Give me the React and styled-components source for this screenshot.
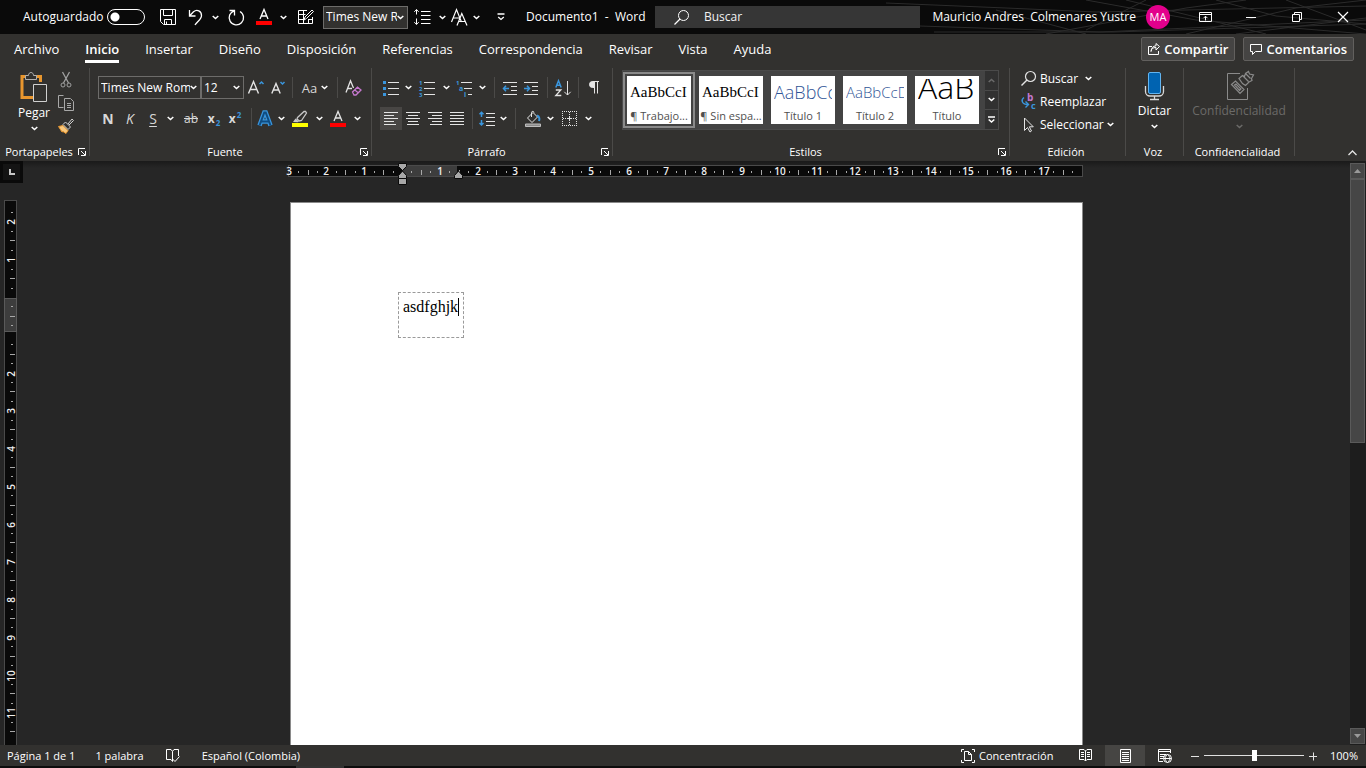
import React from "react";
import styled, { createGlobalStyle, css } from "styled-components";

const UI = '"Open Sans", "Noto Sans", sans-serif';

const GlobalStyle = createGlobalStyle`
  * { box-sizing: border-box; }
  body { margin: 0; background: #262626; overflow: hidden; }
  button, select, input { font: inherit; color: inherit; }
`;

const Shell = styled.div`
  display: flex;
  flex-direction: column;
  height: 100vh;
  font: 12px/16px ${UI};
  color: #fff;
  background: #262626;
`;

/* ---------- shared pieces ---------- */

const Svg = styled.svg`
  display: block;
  flex: none;
  overflow: visible;
  fill: none;
  stroke: ${(p) => p.$stroke || "#e4e4e4"};
  stroke-width: ${(p) => p.$sw || 1};
`;

const Icon = ({ w = 16, h = 16, stroke, sw, children }) => (
  <Svg width={w} height={h} viewBox={`0 0 ${w} ${h}`} $stroke={stroke} $sw={sw} aria-hidden="true">
    {children}
  </Svg>
);

const Chevron = ({ color = "#fff" }) => (
  <Icon w={7} h={5} stroke={color} sw={1.5}>
    <path d="M.7 1l2.8 2.6L6.3 1" />
  </Icon>
);

const BareButton = styled.button`
  display: flex;
  align-items: center;
  justify-content: center;
  flex: none;
  padding: 0;
  border: 0;
  background: none;
  white-space: nowrap;
`;

const Tool = styled(BareButton)`
  width: ${(p) => p.$w || 22}px;
  height: 23px;
  gap: 4px;
  background: ${(p) => (p.$active ? "#484644" : "none")};
`;

const Drop = ({ label }) => (
  <Tool $w={12} aria-label={label}>
    <Chevron />
  </Tool>
);

const Separator = styled.span`
  flex: none;
  width: ${(p) => p.$w || 9}px;
  height: 21px;
  background: linear-gradient(#4b4a48, #4b4a48) center / 1px 100% no-repeat;
`;

const SelectFrame = styled.span`
  display: grid;
  flex: none;
  align-items: center;
  width: ${(p) => p.$w}px;
  height: 23px;
  border: 1px solid #6d6c6a;
  background: #32312f;
  & > * { grid-area: 1 / 1; }
  & > svg { justify-self: end; margin-right: 3px; pointer-events: none; }
`;

const Select = styled.select`
  appearance: none;
  width: 100%;
  height: 21px;
  padding: 0 10px 0 2px;
  border: 0;
  background: transparent;
  font-size: 12px;
  text-overflow: clip;
  outline: none;
`;

const Combo = ({ label, value, w }) => (
  <SelectFrame $w={w}>
    <Select aria-label={label} defaultValue={value}>
      <option>{value}</option>
    </Select>
    <Chevron />
  </SelectFrame>
);

/* ---------- title bar ---------- */

const TitleBar = styled.header`
  position: relative;
  display: flex;
  align-items: center;
  flex: none;
  height: 34px;
  padding-left: 23px;
  background: #0a0a0a;
`;

const Rays = styled.svg`
  position: absolute;
  top: 0;
  right: 0;
  width: 480px;
  height: 34px;
  fill: none;
  stroke: #2b2b2b;
`;

const QuickAccess = styled.div`
  display: flex;
  align-items: center;
  flex: none;
  width: 503px;
`;

const AutoSave = styled.label`
  display: flex;
  align-items: center;
  justify-content: space-between;
  flex: none;
  width: 122px;
  margin-right: 10px;
`;

const Switch = styled.input`
  appearance: none;
  width: 38px;
  height: 16px;
  margin: 0;
  border: 1px solid #fff;
  border-radius: 8px;
  background: radial-gradient(circle at 7px 7px, #fff 4px, transparent 5px);
`;

const DocTitle = styled.h1`
  flex: none;
  width: 129px;
  margin: 0;
  font-size: 12px;
  line-height: 16px;
  font-weight: 400;
  white-space: pre;
`;

const SearchBox = styled.label`
  display: flex;
  align-items: center;
  flex: 0 1 265px;
  height: 22px;
  padding-left: 19px;
  gap: 15px;
  background: #363636;
`;

const SearchInput = styled.input`
  flex: 1;
  min-width: 0;
  padding: 0;
  border: 0;
  background: none;
  outline: none;
  &::placeholder { color: #f2f2f2; opacity: 1; }
`;

const Account = styled(BareButton)`
  position: relative;
  margin-left: auto;
  gap: 10px;
  white-space: pre;
`;

const Avatar = styled.span`
  display: flex;
  align-items: center;
  justify-content: center;
  width: 24px;
  height: 24px;
  border-radius: 50%;
  background: #e3008c;
  font-size: 11px;
`;

const WindowButtons = styled.div`
  position: relative;
  display: flex;
  flex: none;
  margin-left: 12px;
`;

const WindowButton = styled(BareButton)`
  width: 46px;
  height: 32px;
`;

const FontColor = ({ color = "#ff0000", stroke }) => (
  <Icon stroke={stroke}>
    <path d="M4 10L8 .5l4 9.500M5.300 7h5.400" strokeWidth="1.300" />
    <path d="M0 12h16v4H0z" fill={color} stroke="none" />
  </Icon>
);

function Title() {
  return (
    <TitleBar>
      <Rays viewBox="0 0 480 34" aria-hidden="true">
        <path d="M0 3l120 5 90 4 270-6M34 26l180 6 266-12M48 32h180l252-8M160 34L300 8l60-8M200 0l110 20 170 14M260 0l-60 30M300 34L410 8l70-8M330 0l60 16 90 8M240 0l140 34M400 0l80 30M110 10l90 24M350 34l130-16" />
      </Rays>
      <QuickAccess>
        <AutoSave>
          Autoguardado
          <Switch type="checkbox" role="switch" />
        </AutoSave>
        <Tool $w={26} aria-label="Guardar">
          <Icon stroke="#fff">
            <path d="M.5 .5h15v15h-12l-3-3zM3.500 .5v6h9v-6M4.500 15.500v-5h7v5M6.500 15.500v-3" />
          </Icon>
        </Tool>
        <Tool $w={28} aria-label="Deshacer">
          <Icon stroke="#fff">
            <path d="M2.500 1v6h6M2.500 7l4-4.200C10-.2 14.500 2 14.500 6.500c0 4-4.500 6-6.500 9.500" strokeWidth="1.300" />
          </Icon>
        </Tool>
        <Drop label="Opciones de deshacer" />
        <Tool $w={30} aria-label="Rehacer">
          <Icon stroke="#fff">
            <path d="M1.500 1.500h5v5M6.300 1.800A7.200 7.200 0 1 0 12 2.500" strokeWidth="1.300" />
          </Icon>
        </Tool>
        <Tool $w={26} aria-label="Color de fuente">
          <FontColor stroke="#fff" />
        </Tool>
        <Drop label="Más colores" />
        <Tool $w={34} aria-label="Dibujar tabla">
          <Icon stroke="#fff">
            <path d="M9 1.500H.5v13h14V8M.5 5.500h7M.5 10.500h5M5.500 1.500v13M10.500 11v3.500M10 10.500h4.500M6 11l1-3 7-7 1.500 1.500-7 7z" />
          </Icon>
        </Tool>
        <Combo label="Fuente rápida" value="Times New R" w={85} />
        <Tool $w={28} aria-label="Interlineado">
          <Icon stroke="#fff">
            <path d="M2.500 .5v5M.3 2.800L2.500 .6l2.200 2.200M2.500 15.500v-6M.3 13.200l2.200 2.200 2.200-2.200M7 2.500h9.500M7 6.500h9.500M7 10.500h9.500M7 14.500h9.500" />
          </Icon>
        </Tool>
        <Drop label="Opciones de interlineado" />
        <Tool aria-label="Efectos de texto">
          <Icon stroke="#fff">
            <path d="M.5 13L5.500 .5 10.500 13M2 9h7M6 16.500l4.800-12 5.200 12M7.700 12.500h6.600" strokeWidth="1.200" />
          </Icon>
        </Tool>
        <Drop label="Opciones de efectos" />
        <Tool $w={38} aria-label="Personalizar barra">
          <Icon w={8} h={8} stroke="#fff">
            <path d="M.5 1h7M1.200 4l2.800 2.500L6.800 4" strokeWidth="1.300" />
          </Icon>
        </Tool>
      </QuickAccess>
      <DocTitle>Documento1  -  Word</DocTitle>
      <SearchBox>
        <Icon w={15} h={15} stroke="#fff">
          <circle cx="9.500" cy="5.500" r="5" />
          <path d="M6 9L.5 14.500" strokeWidth="1.300" />
        </Icon>
        <SearchInput type="text" placeholder="Buscar" aria-label="Buscar" />
      </SearchBox>
      <Account>
        Mauricio Andres  Colmenares Yustre
        <Avatar>MA</Avatar>
      </Account>
      <WindowButtons>
        <WindowButton aria-label="Opciones de la cinta">
          <Icon w={13} h={10} stroke="#fff">
            <path d="M.5 .5h12v9H.5zM.5 2.500h12M6.500 8.500v-4M4.500 6.200l2-2 2 2" />
          </Icon>
        </WindowButton>
        <WindowButton aria-label="Minimizar">
          <Icon w={10} h={10} stroke="#fff"><path d="M0 5.500h10" /></Icon>
        </WindowButton>
        <WindowButton aria-label="Restaurar">
          <Icon w={10} h={10} stroke="#fff"><path d="M.5 2.500h7v7h-7zM2.500 2.500v-2h7v7h-2" /></Icon>
        </WindowButton>
        <WindowButton aria-label="Cerrar">
          <Icon w={10} h={10} stroke="#fff"><path d="M0 0l10 10M10 0L0 10" strokeWidth="1.200" /></Icon>
        </WindowButton>
      </WindowButtons>
    </TitleBar>
  );
}

/* ---------- tabs ---------- */

const TabBar = styled.nav`
  display: flex;
  align-items: center;
  flex: none;
  height: 30px;
  padding: 0 12px 0 14px;
  background: #32312f;
`;

const TabList = styled.div`
  display: flex;
  gap: 26px;
`;

const Tab = styled(BareButton)`
  height: 28px;
  font-size: 13px;
  line-height: 18px;
  ${(p) => p.$active && css`
    font-weight: 600;
    box-shadow: inset 0 -3px #fff;
  `}
`;

const TabActions = styled.div`
  display: flex;
  gap: 8px;
  margin-left: auto;
`;

const ActionButton = styled(BareButton)`
  height: 24px;
  padding: 0 6px;
  gap: 4px;
  border: 1px solid #62605e;
  border-radius: 2px;
  background: #454443;
  font-size: 13px;
  font-weight: 600;
`;

const tabs = ["Archivo", "Inicio", "Insertar", "Diseño", "Disposición", "Referencias", "Correspondencia", "Revisar", "Vista", "Ayuda"];

const Tabs = () => (
  <TabBar>
    <TabList>
      {tabs.map((t) => <Tab key={t} $active={t === "Inicio"}>{t}</Tab>)}
    </TabList>
    <TabActions>
      <ActionButton>
        <Icon w={12} h={12} stroke="#fff">
          <path d="M4 3.500H.5v8h10V8M3 8.500c.5-3 2-4 5-4V7l3.500-3.500L8 .5v2.300C5 3 3.300 5 3 8.500z" />
        </Icon>
        Compartir
      </ActionButton>
      <ActionButton>
        <Icon w={12} h={12} stroke="#fff"><path d="M.5 1.500h11v7h-6l-3 3v-3h-2z" /></Icon>
        Comentarios
      </ActionButton>
    </TabActions>
  </TabBar>
);

/* ---------- ribbon ---------- */

const Ribbon = styled.div`
  display: flex;
  flex: none;
  height: 97px;
  background: #32312f;
`;

const GroupFrame = styled.section`
  display: flex;
  flex-direction: column;
  flex: 0 0 ${(p) => p.$w}px;
  background: linear-gradient(#4b4a48, #4b4a48) right 4px / 1px 88px no-repeat;
`;

const GroupBody = styled.div`
  display: flex;
  flex: 1;
  padding: ${(p) => p.$pad || "0 8px"};
`;

const GroupFooter = styled.div`
  display: flex;
  align-items: center;
  height: 18px;
  padding-right: 4px;
`;

const GroupTitle = styled.h2`
  flex: 1;
  margin: 0;
  font-size: 11px;
  line-height: 16px;
  font-weight: 500;
  text-align: center;
`;

const Group = ({ title, w, launcher, pad, children }) => (
  <GroupFrame $w={w} aria-label={title}>
    <GroupBody $pad={pad}>{children}</GroupBody>
    <GroupFooter>
      <GroupTitle>{title}</GroupTitle>
      {launcher && (
        <BareButton aria-label={`Más opciones de ${title}`}>
          <Icon w={8} h={8} stroke="#fff">
            <path d="M.5 7V.5H7M3 3l4 4M7.500 3v4.500H3" />
          </Icon>
        </BareButton>
      )}
    </GroupFooter>
  </GroupFrame>
);

const ToolRows = styled.div`
  display: flex;
  flex-direction: column;
  gap: 8px;
  padding-top: 12px;
`;

const ToolRow = styled.div`
  display: flex;
  height: 23px;
  align-items: center;
`;

const BigTool = styled(BareButton)`
  flex-direction: column;
  justify-content: flex-start;
  width: ${(p) => p.$w}px;
  padding-top: 8px;
  color: ${(p) => (p.$off ? "#6b6a68" : "#fff")};
  & > span { margin: 3px 0 5px; }
`;

const SmallStack = styled.div`
  display: flex;
  flex-direction: column;
  padding-top: 4px;
`;

const Glyph = styled.span`
  font-size: ${(p) => p.$size || 14}px;
  line-height: 20px;
  color: #d8d8d8;
  font-weight: ${(p) => (p.$bold ? 700 : 400)};
  font-style: ${(p) => (p.$italic ? "italic" : "normal")};
  text-decoration: ${(p) => p.$line || "none"};
  text-underline-offset: 2px;
  & > sub, & > sup { margin-left: 1px; font-size: 8px; line-height: 0; color: #3a96dd; }
`;

const Clipboard = () => (
  <Group title="Portapapeles" w={90} launcher pad="0 0 0 12px">
    <BigTool $w={44}>
      <Icon w={28} h={30}>
        <path d="M8 4.500H2v21h11M16 4.500h4.500V10" stroke="#e8962e" strokeWidth="3" />
        <path d="M5.500 7.500v-4h3c0-4 5-4 5 0h3v4z" fill="#32312f" stroke="#b0b0b0" />
        <path d="M13.500 12.500h13v17h-13z" fill="#32312f" stroke="#d0d0d0" />
      </Icon>
      <span>Pegar</span>
      <Chevron />
    </BigTool>
    <SmallStack>
      <Tool $w={20} aria-label="Cortar">
        <Icon stroke="#a0a0a0">
          <path d="M4.500 0l6 11M11.500 0l-6 11" strokeWidth="1.300" />
          <circle cx="5" cy="13" r="2" /><circle cx="11" cy="13" r="2" />
        </Icon>
      </Tool>
      <Tool $w={20} aria-label="Copiar">
        <Icon stroke="#a8a8a8">
          <path d="M5.500 12.500H.5V.5h5M8 3.500h3M6.500 3.500h6l3 3v9h-9zM9 8.500h4M9 10.500h4M9 12.500h4" />
        </Icon>
      </Tool>
      <Tool $w={20} aria-label="Copiar formato">
        <Icon stroke="#d0d0d0">
          <path d="M.5 8.500l4.500-1 5 5-2 3-3-2-1 .5z" fill="#f8c77c" stroke="#e8962e" />
          <path d="M5 6.500L7.500 4l5 5L10 11.500zM10 6l4-5 1.500 1.500L11 7" />
        </Icon>
      </Tool>
    </SmallStack>
  </Group>
);

const FontGroup = () => (
  <Group title="Fuente" w={282} launcher>
    <ToolRows>
      <ToolRow>
        <Combo label="Fuente" value="Times New Rom" w={103} />
        <Combo label="Tamaño de fuente" value="12" w={43} />
        <Tool $w={24} aria-label="Aumentar tamaño">
          <Icon>
            <path d="M.5 13.500L5.500 1.500l5 12M2.300 9.500h6.400" strokeWidth="1.400" />
            <path d="M11.500 4l2-2 2 2" stroke="#3a96dd" strokeWidth="1.500" />
          </Icon>
        </Tool>
        <Tool $w={20} aria-label="Reducir tamaño">
          <Icon w={14}>
            <path d="M.8 13.500L5 3.500l4.200 10M2.200 10h5.600" strokeWidth="1.400" />
            <path d="M9.500 2l2 2 2-2" stroke="#3a96dd" strokeWidth="1.500" />
          </Icon>
        </Tool>
        <Separator />
        <Tool $w={36} aria-label="Cambiar mayúsculas">
          <Glyph $size={13}>Aa</Glyph>
          <Chevron />
        </Tool>
        <Separator />
        <Tool aria-label="Borrar formato">
          <Icon w={17}>
            <path d="M1 12.500L5.500 .8 8.500 8M2.500 8.500h4.500" strokeWidth="1.300" />
            <path d="M7.500 12l5-4.800 3.500 2.800-5 5H9zM9.500 9.800l4 3.200" stroke="#c678cf" strokeWidth="1.300" />
          </Icon>
        </Tool>
      </ToolRow>
      <ToolRow>
        <Tool $w={20} aria-label="Negrita"><Glyph $bold>N</Glyph></Tool>
        <Tool $w={24} aria-label="Cursiva"><Glyph $italic>K</Glyph></Tool>
        <Tool aria-label="Subrayado"><Glyph $line="underline">S</Glyph></Tool>
        <Drop label="Opciones de subrayado" />
        <Tool $w={30} aria-label="Tachado"><Glyph $size={12} $line="line-through">ab</Glyph></Tool>
        <Tool $w={16} aria-label="Subíndice"><Glyph $size={12} $bold>x<sub>2</sub></Glyph></Tool>
        <Tool $w={26} aria-label="Superíndice"><Glyph $size={12} $bold>x<sup>2</sup></Glyph></Tool>
        <Separator $w={7} />
        <Tool $w={20} aria-label="Efectos de texto">
          <Icon>
            <path d="M2.500 14.500L7.300 1.500h1.400l4.800 13M4.500 10.500h7" stroke="#3a96dd" strokeWidth="4.500" />
            <path d="M2.500 14.500L7.300 1.500h1.400l4.800 13M4.500 10.500h7" stroke="#0f4c81" strokeWidth="2" />
          </Icon>
        </Tool>
        <Drop label="Opciones de efectos de texto" />
        <Tool $w={26} aria-label="Resaltado">
          <Icon stroke="#c8c8c8">
            <path d="M5.500 6.500L12 .5h1.500l1 1.500-5 7.500-2 .5-2.500-2z" strokeWidth="1.300" />
            <path d="M1 11l2.500-3.500 3.500 3-1 .8z" fill="#c8c8c8" stroke="none" />
            <path d="M0 12h16v4H0z" fill="#ffff00" stroke="none" />
          </Icon>
        </Tool>
        <Drop label="Colores de resaltado" />
        <Tool $w={26} aria-label="Color de fuente"><FontColor /></Tool>
        <Drop label="Más colores de fuente" />
      </ToolRow>
    </ToolRows>
  </Group>
);

const alignments = [
  ["Alinear a la izquierda", "M0 1.500h14M0 4.500h10M0 7.500h14M0 10.500h10M0 13.500h12", true],
  ["Centrar", "M0 1.500h14M2 4.500h10M0 7.500h14M2 10.500h10M1 13.500h12"],
  ["Alinear a la derecha", "M0 1.500h14M4 4.500h10M0 7.500h14M4 10.500h10M2 13.500h12"],
  ["Justificar", "M0 1.500h14M0 4.500h14M0 7.500h14M0 10.500h14M0 13.500h14"],
];

const IconLabel = styled.text`
  fill: ${(p) => p.$color || "#3a96dd"};
  stroke: none;
  font: 700 ${(p) => p.$size || 6}px ${UI};
`;

const Paragraph = () => (
  <Group title="Párrafo" w={241} launcher>
    <ToolRows>
      <ToolRow>
        <Tool aria-label="Viñetas">
          <Icon>
            <path d="M0 1h3v3H0zM0 7h3v3H0zM0 13h3v3H0z" fill="#3a96dd" stroke="none" />
            <path d="M5 2.500h11M5 8.500h11M5 14.500h11" />
          </Icon>
        </Tool>
        <Drop label="Opciones de viñetas" />
        <Tool $w={26} aria-label="Numeración">
          <Icon>
            <IconLabel x="0" y="5">1</IconLabel>
            <IconLabel x="0" y="11">2</IconLabel>
            <IconLabel x="0" y="17">3</IconLabel>
            <path d="M5 2.500h11M5 8.500h11M5 14.500h11" />
          </Icon>
        </Tool>
        <Drop label="Opciones de numeración" />
        <Tool $w={24} aria-label="Lista multinivel">
          <Icon>
            <IconLabel x="0" y="5">1</IconLabel>
            <IconLabel x="3" y="11" $size={7}>a</IconLabel>
            <IconLabel x="8" y="17" $size={7}>i</IconLabel>
            <path d="M5 2.500h11M8 8.500h8M12 14.500h4" />
          </Icon>
        </Tool>
        <Drop label="Opciones de lista multinivel" />
        <Separator $w={13} />
        <Tool $w={18} aria-label="Disminuir sangría">
          <Icon w={14} h={14}>
            <path d="M0 1.500h14M8 5.500h6M8 9.500h6M0 13.500h14" />
            <path d="M6 7.500H.5M3 4.800L.5 7.500 3 10.200" stroke="#3a96dd" strokeWidth="1.500" />
          </Icon>
        </Tool>
        <Tool $w={24} aria-label="Aumentar sangría">
          <Icon w={14} h={14}>
            <path d="M0 1.500h14M8 5.500h6M8 9.500h6M0 13.500h14" />
            <path d="M0 7.500h5.500M3 4.800l2.500 2.700L3 10.200" stroke="#3a96dd" strokeWidth="1.500" />
          </Icon>
        </Tool>
        <Separator />
        <Tool aria-label="Ordenar">
          <Icon>
            <path d="M.8 7.500L3.500 .8l2.700 6.700M1.800 5.300h3.400" stroke="#3a96dd" strokeWidth="1.500" />
            <path d="M.8 10h5l-5 5.500h5.500" strokeWidth="1.300" />
            <path d="M12.500 1v14M9.300 11.800l3.200 3.200 3.200-3.200" />
          </Icon>
        </Tool>
        <Separator />
        <Tool aria-label="Mostrar todo">
          <Icon w={10} h={13}>
            <path d="M5.500 .5h-2a3 3 0 0 0 0 6h2z" fill="#e4e4e4" />
            <path d="M5.500 .5v12M8.500 .5v12M3.500 .5H10" />
          </Icon>
        </Tool>
      </ToolRow>
      <ToolRow>
        {alignments.map(([name, d, active]) => (
          <Tool key={name} aria-label={name} $active={active}>
            <Icon w={14} h={15}><path d={d} /></Icon>
          </Tool>
        ))}
        <Separator />
        <Tool $w={20} aria-label="Espaciado entre líneas">
          <Icon>
            <path d="M2.500 1v5M.5 3.300l2-2 2 2M2.500 9v5.500M.5 12l2 2 2-2" stroke="#3a96dd" strokeWidth="1.500" />
            <path d="M7 2.500h9M7 6.500h9M7 10.500h9M7 14.500h9" />
          </Icon>
        </Tool>
        <Drop label="Opciones de espaciado" />
        <Separator $w={13} />
        <Tool aria-label="Sombreado">
          <Icon>
            <path d="M2.500 7L8 1.500 12.500 6 7 11.500zM6.500 6V1.500c0-1.500 2.500-1.500 2.500 0" />
            <path d="M12 4.500c3 1 2.500 4 2 5.500" stroke="#3a96dd" strokeWidth="2" />
            <path d="M.5 13h15v2.500H.5z" fill="#8a8a8a" stroke="#bdbdbd" />
          </Icon>
        </Tool>
        <Drop label="Colores de sombreado" />
        <Tool $w={26} aria-label="Bordes">
          <Icon w={15} h={15}>
            <path d="M0 .5h15M0 14.500h15M.5 0v15M14.500 0v15" strokeDasharray="1 1" />
            <path d="M1 7.500h13M7.500 1v13" strokeDasharray="1 1" />
            <path d="M5.500 7.500h4M7.500 5.500v4" />
          </Icon>
        </Tool>
        <Drop label="Opciones de bordes" />
      </ToolRow>
    </ToolRows>
  </Group>
);

const Gallery = styled.div`
  display: flex;
  height: 60px;
  margin-top: 6px;
  border: 1px solid #4a4a4a;
  background: #434343;
`;

const StyleCard = styled.button`
  display: flex;
  flex-direction: column;
  width: 72px;
  height: 56px;
  margin-top: 1px;
  padding: 2px;
  border: 2px solid ${(p) => (p.$active ? "#8a8a8a" : "transparent")};
  background: transparent;
  text-align: center;
`;

const Sheet = styled.span`
  display: block;
  width: 64px;
  height: 48px;
  padding: 3px 3px 0;
  background: #fff;
`;

const Sample = styled.span`
  display: block;
  height: 29px;
  overflow: hidden;
  text-align: left;
  white-space: nowrap;
  color: ${(p) => p.$color || "#000"};
  font-family: ${(p) => (p.$serif ? '"Liberation Serif", serif' : UI)};
  font-size: ${(p) => p.$size}px;
  font-weight: ${(p) => (p.$serif ? 400 : 300)};
  line-height: ${(p) => p.$line || 26}px;
`;

const StyleName = styled.span`
  display: block;
  margin: 0 -3px;
  color: #505050;
  font-size: 11px;
  line-height: 16px;
  white-space: nowrap;
`;

const GalleryNav = styled.div`
  display: grid;
  grid-template-rows: repeat(3, 1fr);
  gap: 1px;
  width: 13px;
  margin-left: 2px;
  background: #4a4a4a;
`;

const NavButton = styled(BareButton)`
  background: #313131;
`;

const styleCards = [
  { name: "¶ Trabajo...", text: "AaBbCcI", size: 15, serif: true, active: true },
  { name: "¶ Sin espa...", text: "AaBbCcI", size: 15, serif: true },
  { name: "Título 1", text: "AaBbCc", size: 18, color: "#2f5496" },
  { name: "Título 2", text: "AaBbCcD", size: 15, color: "#2f5496" },
  { name: "Título", text: "AaB", size: 32, line: 16 },
];

const Styles = () => (
  <Group title="Estilos" w={397} launcher pad="0 10px 0 9px">
    <Gallery>
      {styleCards.map((s) => (
        <StyleCard key={s.name} $active={s.active}>
          <Sheet>
            <Sample $size={s.size} $serif={s.serif} $color={s.color} $line={s.line}>{s.text}</Sample>
            <StyleName>{s.name}</StyleName>
          </Sheet>
        </StyleCard>
      ))}
      <GalleryNav>
        <NavButton aria-label="Estilos anteriores">
          <Icon w={7} h={5} stroke="#6a6a6a" sw={1.5}><path d="M.7 4l2.800-2.600L6.300 4" /></Icon>
        </NavButton>
        <NavButton aria-label="Estilos siguientes"><Chevron /></NavButton>
        <NavButton aria-label="Más estilos">
          <Icon w={7} h={8} stroke="#fff"><path d="M0 1h7M.7 3.500l2.800 2.600 2.800-2.600" strokeWidth="1.500" /></Icon>
        </NavButton>
      </GalleryNav>
    </Gallery>
  </Group>
);

const EditStack = styled.div`
  display: flex;
  flex-direction: column;
  padding-top: 3px;
`;

const EditButton = styled(BareButton)`
  justify-content: flex-start;
  height: 23px;
  gap: 3px;
`;

const EditLabel = styled.span`
  min-width: 42px;
  text-align: left;
`;

const Editing = () => (
  <Group title="Edición" w={116} pad="0 0 0 11px">
    <EditStack>
      <EditButton>
        <Icon>
          <circle cx="9.500" cy="5.500" r="5" strokeWidth="1.200" /><path d="M6 9L.5 14.500" strokeWidth="1.500" />
        </Icon>
        <EditLabel>Buscar</EditLabel>
        <Chevron />
      </EditButton>
      <EditButton>
        <Icon>
          <IconLabel x="6" y="7" $size={10} $color="#c678cf">b</IconLabel>
          <IconLabel x="10" y="15" $size={9}>c</IconLabel>
          <path d="M3 3.500C-.5 6 1 10.500 7 10.500M4.500 7.500l3 3-3 3" stroke="#3a96dd" strokeWidth="1.400" />
        </Icon>
        Reemplazar
      </EditButton>
      <EditButton>
        <Icon><path d="M3.500 1v12.500l3-3 2.500 4.500 1.500-1-2.200-4.200h4z" /></Icon>
        Seleccionar
        <Chevron />
      </EditButton>
    </EditStack>
  </Group>
);

const Voice = () => (
  <Group title="Voz" w={58} pad="0">
    <BigTool $w={57}>
      <Icon w={19} h={28} stroke="#d8d8d8">
        <path d="M.5 14v5.500a4.500 4.500 0 0 0 4.500 4.500h9a4.500 4.500 0 0 0 4.500-4.500V14M9.500 24v3.500M5 27.500h9" strokeWidth="1.300" />
        <rect x="3.500" y=".5" width="12" height="21" rx="1.500" fill="#0063b1" stroke="#62b4f0" />
      </Icon>
      <span>Dictar</span>
      <Chevron />
    </BigTool>
  </Group>
);

const Sensitivity = () => (
  <Group title="Confidencialidad" w={111} pad="0">
    <BigTool $w={110} $off>
      <Icon w={24} h={28} stroke="#8a8a8a">
        <path d="M13 1.500H.5v26h20V16" />
        <path d="M4.500 12.500l4-3.500 8.500 8.500-4 4zM7.500 13l1.500-1 5 5-1.500 1.500z" strokeWidth="1.200" />
        <path d="M12 6.500l3.500-3 2 1 1-3 3-2 1 2.500 4 1-2 3.500.5 2-3 1.500-3.500 3.500-3-2zM15.500 3.500l6 6M18.500 1.500l5 5" strokeWidth="1.200" />
      </Icon>
      <span>Confidencialidad</span>
      <Chevron color="#6b6a68" />
    </BigTool>
  </Group>
);

const Collapse = styled(BareButton)`
  align-self: flex-end;
  margin: 0 9px 5px auto;
`;

/* ---------- document area ---------- */

const Workspace = styled.main`
  display: grid;
  grid-template-columns: 23px minmax(0, 1fr) 16px;
  flex: 1;
  min-height: 0;
  overflow: hidden;
  background: linear-gradient(#1a1a1a, #262626 7px);
`;

const RulerColumn = styled.div`
  display: flex;
  flex-direction: column;
  gap: 17px;
  min-height: 0;
  overflow: hidden;
`;

const TabStop = styled(BareButton)`
  width: 23px;
  height: 22px;
  border: 3px solid #0a0a0a;
  background: #141414;
`;

const Canvas = styled.div`
  display: flex;
  flex-direction: column;
  align-items: center;
  min-height: 0;
  overflow: hidden;
`;

const RulerSvg = styled.svg`
  display: block;
  flex: none;
  overflow: visible;
  text {
    fill: #f0f0f0;
    font: 600 10px ${UI};
    text-anchor: middle;
  }
`;

const CM = 37.76;

/* Tick marks of a scale: a number on every centimetre, a dash on each half, a dot on each quarter. */
function scale(from, to, skip) {
  const marks = [];
  for (let q = from; q <= to; q += 1) {
    if (q === 0) continue;
    const at = Math.round((q * CM) / 4);
    if (q % 4 === 0) {
      if (!skip.includes(q / 4)) marks.push({ at, text: Math.abs(q / 4) });
    } else marks.push({ at, half: q % 2 === 0 });
  }
  return marks;
}

const HorizontalRuler = () => (
  <RulerSvg width="793" height="41" viewBox="290 161 793 41" role="img" aria-label="Regla horizontal">
    <rect x="288.500" y="165.500" width="794" height="11" fill="#0a0a0a" stroke="#4a4a4a" />
    <rect x="403" y="166" width="54" height="10" fill="#3d3d3d" />
    {scale(-12, 71, []).map((m) =>
      m.text ? (
        <text key={m.at} x={402 + m.at} y="175">{m.text}</text>
      ) : (
        <rect key={m.at} x={402 + m.at} y={m.half ? 170 : 171} width="1" height={m.half ? 5 : 2} fill="#a8a8a8" />
      )
    )}
    <g fill="#a8a8a8" stroke="#0a0a0a">
      <path d="M398.500 163.500h8v3l-4 4-4-4z" />
      <path d="M398.500 178.500v-3l4-4.500 4 4.500v3z" />
      <path d="M398.500 178.500h8v6h-8z" />
      <path d="M454.500 178.500v-3l4-4.500 4 4.500v3z" />
    </g>
  </RulerSvg>
);

const VerticalRuler = () => (
  <RulerSvg width="23" height="800" viewBox="0 200 23 800" role="img" aria-label="Regla vertical">
    <rect x="4.500" y="200.500" width="12" height="900" fill="#0a0a0a" stroke="#4a4a4a" />
    <rect x="4.500" y="298.500" width="12" height="33" fill="#3d3d3d" stroke="#5a5a5a" />
    {scale(-9, 46, [1]).map((m) =>
      m.text ? (
        <text key={m.at} transform={`translate(15 ${298 + m.at}) rotate(-90)`}>{m.text}</text>
      ) : (
        <rect key={m.at} x={m.half ? 10 : 11} y={297 + m.at} width={m.half ? 5 : 2} height="1" fill="#a8a8a8" />
      )
    )}
  </RulerSvg>
);

const Page = styled.article`
  flex: none;
  width: 793px;
  min-height: 1122px;
  padding: 89px 107px;
  border: 1px solid #8a8a8a;
  background: #fff;
  color: #000;
`;

const TextFrame = styled.div`
  width: 66px;
  height: 46px;
  padding: 4px;
  border: 1px dashed #9a9a9a;
`;

const TextLine = styled.p`
  display: flex;
  align-items: center;
  margin: 0;
  font: 16px/20px "Liberation Serif", serif;
`;

const Caret = styled.span`
  width: 1px;
  height: 18px;
  background: #000;
`;

const ScrollBar = styled.div`
  display: flex;
  flex-direction: column;
  padding: 2px 1px 1px 0;
  background: #1d1d1d;
`;

const ScrollButton = styled(BareButton)`
  height: 16px;
  border: 1px solid #5a5a5a;
  background: #464646;
`;

const Thumb = styled.div`
  height: 264px;
  margin-bottom: auto;
  border: 1px solid #5a5a5a;
  background: #464646;
`;

/* ---------- status bar ---------- */

const StatusBar = styled.footer`
  display: flex;
  align-items: center;
  flex: none;
  height: 21px;
  padding: 0 8px 0 7px;
  background: #32312f;
  font-size: 11px;
`;

const StatusItems = styled.div`
  display: flex;
  align-items: center;
  gap: ${(p) => p.$gap || 0}px;
  margin-left: ${(p) => (p.$end ? "auto" : 0)};
`;

const StatusButton = styled(BareButton)`
  height: 21px;
  gap: 4px;
  justify-content: ${(p) => (p.$start ? "flex-start" : "center")};
  width: ${(p) => (p.$w ? `${p.$w}px` : "auto")};
  background: ${(p) => (p.$active ? "#464543" : "none")};
`;

const Zoom = styled.label`
  display: flex;
  align-items: center;
  gap: 5px;
  margin: 0 13px 0 6px;
`;

const Slider = styled.input`
  appearance: none;
  width: 100px;
  height: 12px;
  margin: 0;
  background: linear-gradient(#e0e0e0, #e0e0e0) center / 100% 1px no-repeat;
  &::-webkit-slider-thumb {
    appearance: none;
    width: 5px;
    height: 11px;
    background: #fff;
  }
`;

const TaskbarEdge = styled.div`
  flex: none;
  height: 2px;
  background: linear-gradient(90deg, #0d0d0d 296px, #333 296px, #333 344px, #0d0d0d 344px);
`;

const Status = () => (
  <StatusBar>
    <StatusItems $gap={20}>
      <StatusButton>Página 1 de 1</StatusButton>
      <StatusButton>1 palabra</StatusButton>
      <StatusButton $w={18} aria-label="Revisión">
        <Icon w={14} h={13} stroke="#fff">
          <path d="M6.500 2.500L5 .5H.5v10H5l1.500 2V2.500l1.500-2h4.500V7M6.500 10l2.500 2.500L13.500 7.500" />
        </Icon>
      </StatusButton>
      <StatusButton>Español (Colombia)</StatusButton>
    </StatusItems>
    <StatusItems $end>
      <StatusButton $w={104} $start>
        <Icon w={14} h={14} stroke="#fff">
          <path d="M3 .5H.5V3M.5 11v2.500H3M11 .5h2.500V3M13.500 11v2.500H11M3.500 2.500h4l3 3v6h-7zM7.500 2.500v3h3" />
        </Icon>
        Concentración
      </StatusButton>
      <StatusButton $w={40} aria-label="Modo de lectura">
        <Icon w={13} h={13} stroke="#fff">
          <path d="M6.500 2l-1.500-1.500H.5v10H5L6.500 12 8 10.500h4.500V.5H8zM6.500 2v10M2 3.500h3M2 5.500h3M2 7.500h3M8 3.500h3M8 5.500h3M8 7.500h3" />
        </Icon>
      </StatusButton>
      <StatusButton $w={40} $active aria-label="Diseño de impresión">
        <Icon w={11} h={14} stroke="#fff">
          <path d="M.5 .5h10v13H.5zM2 3.500h7M2 5.500h7M2 7.500h7M2 9.500h7M2 11.500h7" />
        </Icon>
      </StatusButton>
      <StatusButton $w={40} aria-label="Diseño web">
        <Icon w={14} h={14} stroke="#fff">
          <path d="M5 12.500H.5V.5h12V4M.5 2.500h12M2 5.500h6M2 7.500h4M2 9.500h3" />
          <circle cx="9.500" cy="9.500" r="4" /><path d="M5.500 9.500h8M9.500 5.500c-3 2.500-3 5.500 0 8M9.500 5.500c3 2.500 3 5.500 0 8" />
        </Icon>
      </StatusButton>
      <Zoom>
        <Icon w={8} h={8}><path d="M0 4.500h8" /></Icon>
        <Slider type="range" aria-label="Zoom" min="0" max="100" defaultValue="50" />
        <Icon w={8} h={8}><path d="M0 4.500h8M4.500 .5v8" /></Icon>
      </Zoom>
      <StatusButton>100%</StatusButton>
    </StatusItems>
  </StatusBar>
);

export default function App() {
  return (
    <Shell>
      <GlobalStyle />
      <Title />
      <Tabs />
      <Ribbon>
        <Clipboard />
        <FontGroup />
        <Paragraph />
        <Styles />
        <Editing />
        <Voice />
        <Sensitivity />
        <Collapse aria-label="Contraer la cinta">
          <Icon w={9} h={6} stroke="#e4e4e4" sw={1.3}><path d="M.5 5l4-4 4 4" /></Icon>
        </Collapse>
      </Ribbon>
      <Workspace>
        <RulerColumn>
          <TabStop aria-label="Tabulación izquierda">
            <Icon w={6} h={6} stroke="#c8c8c8" sw={2}><path d="M1 0v5h5" /></Icon>
          </TabStop>
          <VerticalRuler />
        </RulerColumn>
        <Canvas>
          <HorizontalRuler />
          <Page>
            <TextFrame>
              <TextLine>asdfghjk<Caret /></TextLine>
            </TextFrame>
          </Page>
        </Canvas>
        <ScrollBar>
          <ScrollButton aria-label="Subir">
            <Icon w={7} h={4}><path d="M0 4l3.500-4L7 4z" fill="#9a9a9a" stroke="none" /></Icon>
          </ScrollButton>
          <Thumb />
          <ScrollButton aria-label="Bajar">
            <Icon w={7} h={4}><path d="M0 0l3.500 4L7 0z" fill="#9a9a9a" stroke="none" /></Icon>
          </ScrollButton>
        </ScrollBar>
      </Workspace>
      <Status />
      <TaskbarEdge />
    </Shell>
  );
}
